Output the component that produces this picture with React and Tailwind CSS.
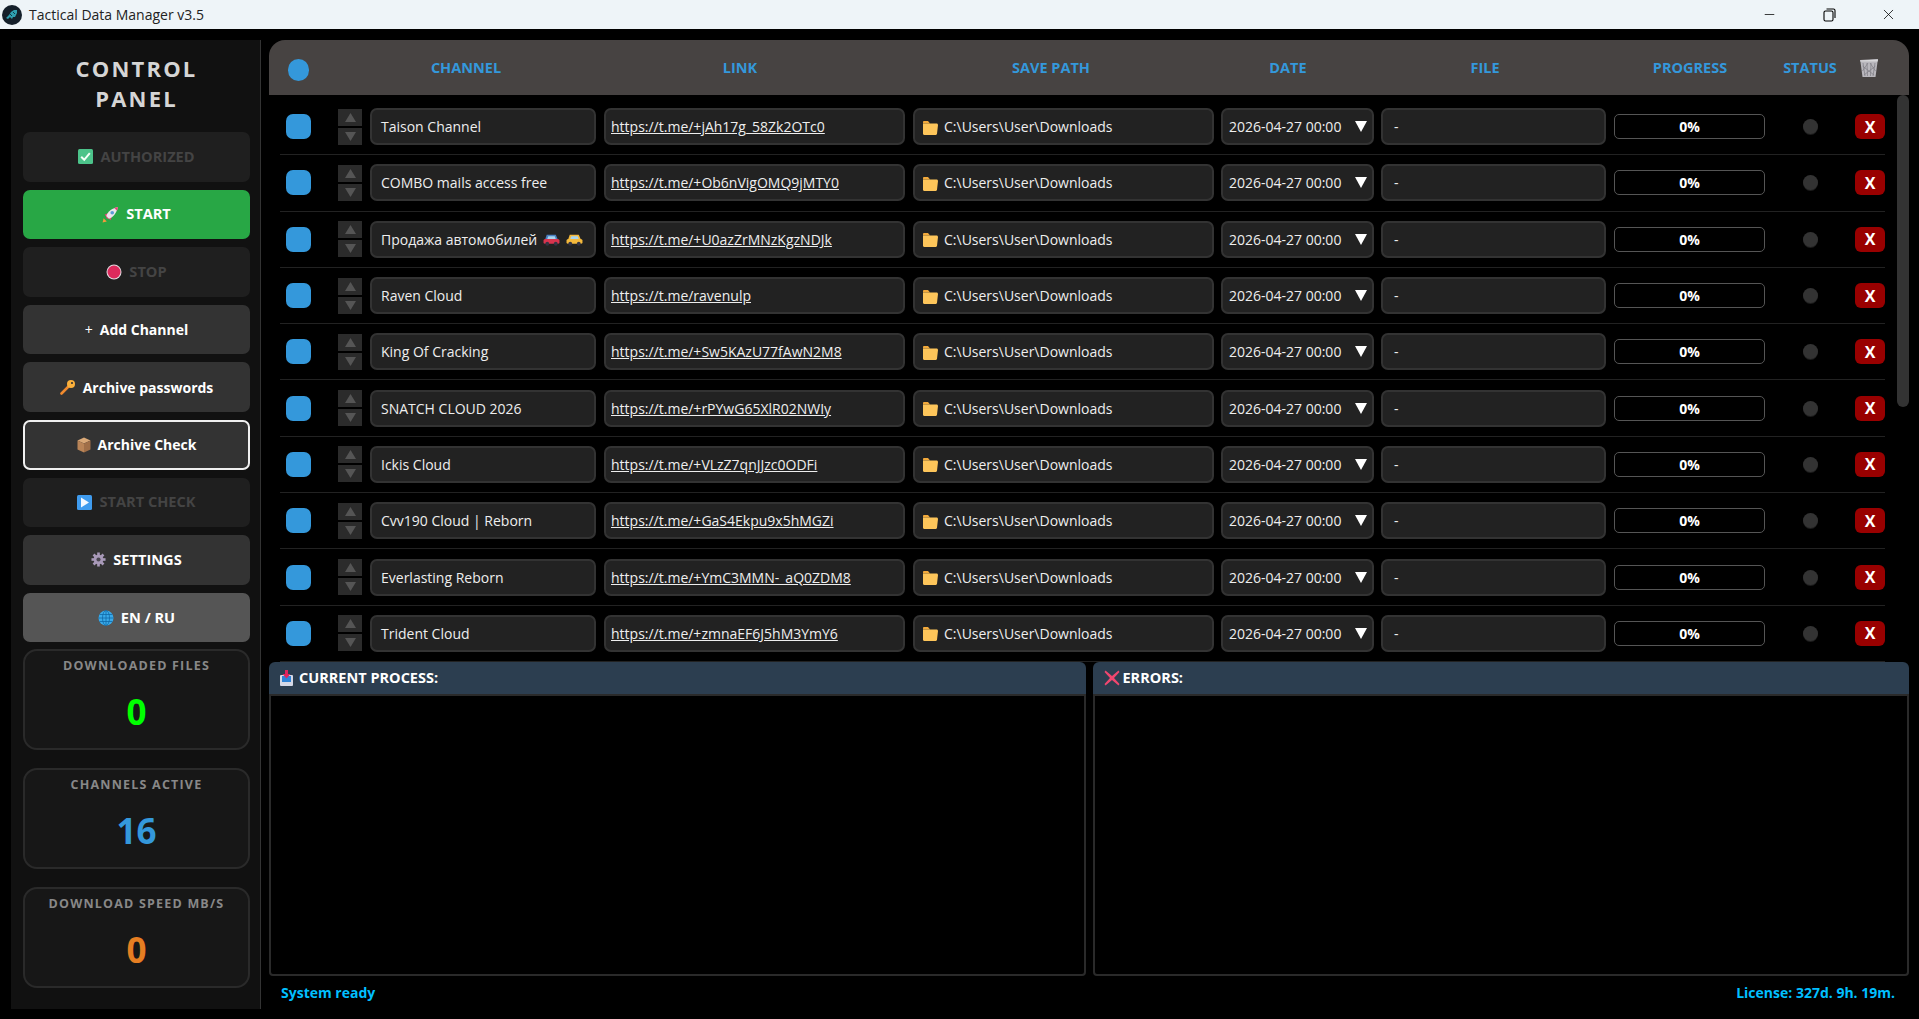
import { Minus, X } from "lucide-react";

const CHANNELS = [
  { name: "Taison Channel", link: "https://t.me/+jAh17g_58Zk2OTc0" },
  { name: "COMBO mails access free", link: "https://t.me/+Ob6nVigOMQ9jMTY0" },
  { name: "Продажа автомобилей", link: "https://t.me/+U0azZrMNzKgzNDJk", cars: true },
  { name: "Raven Cloud", link: "https://t.me/ravenulp" },
  { name: "King Of Cracking", link: "https://t.me/+Sw5KAzU77fAwN2M8" },
  { name: "SNATCH CLOUD 2026", link: "https://t.me/+rPYwG65XlR02NWIy" },
  { name: "Ickis Cloud", link: "https://t.me/+VLzZ7qnJJzc0ODFi" },
  { name: "Cvv190 Cloud | Reborn", link: "https://t.me/+GaS4Ekpu9x5hMGZi" },
  { name: "Everlasting Reborn", link: "https://t.me/+YmC3MMN-_aQ0ZDM8" },
  { name: "Trident Cloud", link: "https://t.me/+zmnaEF6J5hM3YmY6" },
];

// Emoji drawn by hand, there is no colour emoji font on the page
function CheckEmoji() {
  return (
    <svg width="15" height="15" viewBox="0 0 15 15">
      <rect width="15" height="15" rx="1.5" fill="#4cc38a" />
      <path d="M3.2 7.8 6.2 10.8 11.8 4.2" fill="none" stroke="#f4fff8" strokeWidth="2" />
    </svg>
  );
}

function RocketEmoji() {
  return (
    <svg width="17" height="17" viewBox="0 0 16 16">
      <path d="M0.5 15.5 1.5 11.5 4.5 14.5Z" fill="#f5993d" />
      <path d="M2.5 8 6.5 6.5 9.5 9.5 8 13.5 6 11.5 4.5 12 4 10Z" fill="#ef3f7a" />
      <path d="M4 9.5C5.5 5 10 2 15 1 14 6 11 10.5 6.5 12Z" fill="#e8e6ea" />
      <path d="M11.5 1.8 15 1 14.2 4.5Z" fill="#ef3f7a" />
      <circle cx="9.6" cy="6.4" r="1.7" fill="#5b9bd5" />
    </svg>
  );
}

function StopEmoji() {
  return (
    <svg width="16" height="16" viewBox="0 0 16 16">
      <circle cx="8" cy="8" r="7.5" fill="#e0dce0" />
      <circle cx="8" cy="8" r="6.5" fill="#dc2a5c" />
    </svg>
  );
}

function KeyEmoji() {
  return (
    <svg width="16" height="16" viewBox="0 0 16 16">
      <path d="M9 7 1.5 14.5" stroke="#f08a2e" strokeWidth="2.6" strokeLinecap="round" />
      <circle cx="11" cy="5" r="4" fill="#fbb03b" />
      <circle cx="12" cy="4" r="1.1" fill="#333333" />
    </svg>
  );
}

function PackageEmoji() {
  return (
    <svg width="14" height="16" viewBox="0 0 14 16">
      <path d="M7 0.5 13.5 3.5 7 6.5 0.5 3.5Z" fill="#d9a877" />
      <path d="M0.5 3.5 7 6.5V15.5L0.5 12.5Z" fill="#b98457" />
      <path d="M13.5 3.5 7 6.5V15.5L13.5 12.5Z" fill="#a06f48" />
    </svg>
  );
}

function PlayEmoji() {
  return (
    <svg width="15" height="15" viewBox="0 0 15 15">
      <rect width="15" height="15" rx="1.5" fill="#3f9bee" />
      <path d="M4 2.5 12 7.5 4 12.5Z" fill="#f4f8ff" />
    </svg>
  );
}

function GearEmoji() {
  return (
    <svg width="15" height="15" viewBox="0 0 16 16">
      <g stroke="#a899b8" strokeWidth="2.8">
        <path d="M8 0.5V15.5" />
        <path d="M0.5 8H15.5" />
        <path d="M2.7 2.7 13.3 13.3" />
        <path d="M13.3 2.7 2.7 13.3" />
      </g>
      <circle cx="8" cy="8" r="5.2" fill="#a899b8" />
      <circle cx="8" cy="8" r="2.2" fill="#4a4650" />
    </svg>
  );
}

function GlobeEmoji() {
  return (
    <svg width="16" height="16" viewBox="0 0 16 16">
      <circle cx="8" cy="8" r="7.5" fill="#39a9e8" />
      <g fill="none" stroke="#0f6aa8" strokeWidth="0.8">
        <ellipse cx="8" cy="8" rx="3.5" ry="7.5" />
        <path d="M8 0.5V15.5" />
        <path d="M0.5 8H15.5" />
        <path d="M1.6 4.5H14.4" />
        <path d="M1.6 11.5H14.4" />
      </g>
    </svg>
  );
}

function FolderEmoji() {
  return (
    <svg width="15" height="14" viewBox="0 0 15 14" className="mt-[2px] shrink-0">
      <path d="M0 1.2C0 .5.5 0 1.2 0H5L7 2.5H0Z" fill="#f2a93b" />
      <path d="M0 2.5H13.5C14.4 2.5 15 3.2 15 4L14 12.8C14 13.5 13.4 14 12.8 14H1.2C.5 14 0 13.5 0 12.8Z" fill="#fdc55a" />
    </svg>
  );
}

function CarEmoji({ body, top }) {
  return (
    <svg width="17" height="13" viewBox="0 0 16 12">
      <path d="M3.5 1.5H12L14 6H2Z" fill={top} />
      <path d="M5 3H11L12 5.5H4Z" fill="#a8d4ee" />
      <rect x="0.5" y="5.5" width="15" height="4.5" rx="1.5" fill={body} />
      <circle cx="4" cy="10" r="1.8" fill="#333344" />
      <circle cx="12" cy="10" r="1.8" fill="#333344" />
    </svg>
  );
}

function InboxEmoji() {
  return (
    <svg width="13" height="16" viewBox="0 0 13 16">
      <rect y="5" width="13" height="11" rx="1" fill="#d5d8e6" />
      <rect x="2" y="6" width="9" height="6" fill="#2f83d6" />
      <path d="M5 0H8V4H10.5L6.5 8.5 2.5 4H5Z" fill="#e0245e" />
    </svg>
  );
}

function TrashIcon() {
  return (
    <svg width="20" height="20" viewBox="0 0 20 20">
      <path d="M1 2 19 1 18.5 4 16.5 19H3.5L1.5 4Z" fill="#b9b7bd" />
      <path d="M1 2.5 19 1.5 18.7 3.6H1.3Z" fill="#d8d7da" />
      <path d="M4 5 6 18M8 5 8.5 18M12 5 11.5 18M16 5 14 18M3.5 8 15 17M16.5 8 5 17M3.5 13 9 5M16.5 13 11 5" stroke="#7e7c84" strokeWidth="0.7" />
    </svg>
  );
}

function AppLogo() {
  return (
    <svg width="20" height="20" viewBox="0 0 20 20">
      <circle cx="10" cy="10" r="10" fill="#15202b" />
      <path d="M4 13 7 10 9 7 12 5 15 5 15 8 13 12 11 12 10 14 8 12 6 14Z" fill="#2f9fb0" />
      <path d="M8 9 10 11M11 7 13 9" stroke="#103a48" strokeWidth="1" />
    </svg>
  );
}

function SideButton({ icon, label, variant = "normal", caps = false }) {
  const styles = {
    normal: "bg-[#333333] text-white",
    disabled: "bg-[#1f1f1f] text-[#444444]",
    start: "bg-[#28a745] text-white",
    focused: "bg-[#333333] text-white border-2 border-[#f0f0f0]",
    lang: "bg-[#555555] text-white",
  };
  return (
    <div className={`flex h-[49.6px] items-center justify-center gap-[7px] rounded-[7px] font-bold ${caps ? "text-[14.6px]" : "text-[14px]"} ${styles[variant]}`}>
      {icon}
      <span>{label}</span>
    </div>
  );
}

function StatCard({ label, value, color }) {
  return (
    <div className="flex h-[101px] flex-col items-center rounded-[14px] border-2 border-[#2a2a2a] bg-[#171717] pt-[6px]">
      <div className="text-[12.5px] font-bold tracking-[1.2px] text-[#888888]">{label}</div>
      <div className={`mt-[12px] text-[35px] font-bold leading-[48px] ${color}`}>{value}</div>
    </div>
  );
}

function Field({ className = "", children }) {
  return (
    <div className={`flex h-[37px] items-center rounded-[7px] border-2 border-[#333333] bg-[#222222] text-[14px] text-[#eeeeee] ${className}`}>
      {children}
    </div>
  );
}

function Row({ channel }) {
  return (
    <div className="grid flex-1 grid-cols-[58px_32px_234px_309px_308px_160px_233px_161px_70px_40px] items-center border-b border-[#222222]">
      <div className="ml-[6px] h-[25px] w-[25px] rounded-[7px] bg-[#3498db]" />
      <div className="flex w-[24px] flex-col gap-[2px]">
        <div className="flex h-[17px] items-center justify-center bg-[#2b2b2b]">
          <svg width="11" height="9" viewBox="0 0 11 9"><path d="M5.5 0 11 9H0Z" fill="#555555" /></svg>
        </div>
        <div className="flex h-[17px] items-center justify-center bg-[#2b2b2b]">
          <svg width="11" height="9" viewBox="0 0 11 9"><path d="M0 0H11L5.5 9Z" fill="#555555" /></svg>
        </div>
      </div>
      <Field className="w-[226px] gap-[6px] pl-[9px]">
        <span>{channel.name}</span>
        {channel.cars && <CarEmoji body="#d8344e" top="#4a7fc1" />}
        {channel.cars && <CarEmoji body="#f4b93c" top="#f4b93c" />}
      </Field>
      <Field className="w-[301px] pl-[5px]">
        <span className="underline">{channel.link}</span>
      </Field>
      <Field className="w-[300.5px] gap-[6px] pl-[8px]">
        <FolderEmoji />
        <span>C:\Users\User\Downloads</span>
      </Field>
      <Field className="w-[153px] justify-between pl-[6px] pr-[5px]">
        <span>2026-04-27 00:00</span>
        <svg width="12" height="11" viewBox="0 0 12 11" className="shrink-0"><path d="M0 0H12L6 11Z" fill="#ffffff" /></svg>
      </Field>
      <Field className="w-[224.5px] pl-[11px]">-</Field>
      <div className="flex h-[25px] w-[151px] items-center justify-center rounded-[5px] border border-[#555555] bg-black text-[14px] font-bold text-white">
        0%
      </div>
      <div className="flex justify-center">
        <div className="h-[15px] w-[15px] rounded-full bg-[#333333] shadow-[0_1px_0_#1c1c1c]" />
      </div>
      <div className="flex justify-end">
        <div className="flex h-[25px] w-[30px] items-center justify-center rounded-[6px] bg-[#990000] text-[16px] font-bold text-white">
          X
        </div>
      </div>
    </div>
  );
}

function LogPanel({ icon, title, gap }) {
  return (
    <div className="flex flex-col">
      <div className={`flex h-[32px] items-center rounded-t-[6px] bg-[#2c3e50] pl-[11px] text-[14.5px] font-bold text-white ${gap}`}>
        {icon}
        <span>{title}</span>
      </div>
      <div className="flex-1 rounded-b-[4px] border-2 border-[#2a2a2a] bg-black" />
    </div>
  );
}

export default function App() {
  return (
    <div className="flex h-screen flex-col overflow-hidden bg-black font-['Open_Sans',sans-serif]">
      {/* title bar */}
      <div className="flex h-[29px] items-center bg-[#eef4f8] pl-[2px] text-[14px] text-[#222222]">
        <AppLogo />
        <span className="ml-[7px]">Tactical Data Manager v3.5</span>
        <div className="ml-auto flex items-center pr-[22px] text-black">
          <Minus size={15} strokeWidth={1.2} />
          <svg width="13" height="14" viewBox="0 0 13 14" fill="none" stroke="#000000" strokeWidth="1.1" className="ml-[46px]">
            <rect x="1" y="3" width="9" height="10" rx="1.5" />
            <path d="M3.5 1H10.5C11.4 1 12 1.7 12 2.5V10" />
          </svg>
          <X size={17} strokeWidth={1.1} className="ml-[44px]" />
        </div>
      </div>

      <div className="flex min-h-0 flex-1 pb-[10px] pl-[11px] pr-[10px] pt-[11px]">
        {/* control panel */}
        <aside className="flex w-[250px] shrink-0 flex-col border-r border-[#333333] bg-[#111111] pl-[12px] pr-[10px]">
          <div className="pt-[13px] text-center text-[22px] font-bold leading-[30px] tracking-[2.2px] text-[#d5d5d5]">
            CONTROL
            <br />
            PANEL
          </div>
          <div className="mt-[19px] flex flex-col gap-[8px]">
            <SideButton caps variant="disabled" icon={<CheckEmoji />} label="AUTHORIZED" />
            <SideButton caps variant="start" icon={<RocketEmoji />} label="START" />
            <SideButton caps variant="disabled" icon={<StopEmoji />} label="STOP" />
            <SideButton icon={<span className="font-normal">+</span>} label="Add Channel" />
            <SideButton icon={<KeyEmoji />} label="Archive passwords" />
            <SideButton variant="focused" icon={<PackageEmoji />} label="Archive Check" />
            <SideButton caps variant="disabled" icon={<PlayEmoji />} label="START CHECK" />
            <SideButton caps icon={<GearEmoji />} label="SETTINGS" />
            <SideButton caps variant="lang" icon={<GlobeEmoji />} label="EN / RU" />
          </div>
          <div className="mt-[7px] flex flex-col gap-[18px]">
            <StatCard label="DOWNLOADED FILES" value="0" color="text-[#00ff00]" />
            <StatCard label="CHANNELS ACTIVE" value="16" color="text-[#3498db]" />
            <StatCard label="DOWNLOAD SPEED MB/S" value="0" color="text-[#e67e22]" />
          </div>
        </aside>

        <main className="ml-[8px] flex min-w-0 flex-1 flex-col">
          {/* table head */}
          <div className="grid h-[55px] shrink-0 grid-cols-[50px_272px_276px_346px_128px_266px_144px_96px_22px] items-center rounded-t-[16px] bg-[#474342] pl-[11px] text-center text-[14.5px] font-bold text-[#3498db]">
            <div className="ml-[8px] mt-[4px] h-[22px] w-[21px] rounded-full bg-[#3498db]" />
            <div>CHANNEL</div>
            <div>LINK</div>
            <div>SAVE PATH</div>
            <div>DATE</div>
            <div>FILE</div>
            <div>PROGRESS</div>
            <div>STATUS</div>
            <div className="flex justify-center">
              <TrashIcon />
            </div>
          </div>

          {/* rows and their scrollbar */}
          <div className="flex h-[567px] shrink-0">
            <div className="ml-[11px] flex w-[1605px] flex-col pt-[4px]">
              {CHANNELS.map((c) => (
                <Row key={c.name} channel={c} />
              ))}
            </div>
            <div className="ml-[12px] h-[312px] w-[12px] rounded-full bg-[#333333]" />
          </div>

          {/* logs */}
          <div className="grid min-h-0 flex-1 grid-cols-2 gap-[7px]">
            <LogPanel icon={<InboxEmoji />} title="CURRENT PROCESS:" gap="gap-[6px]" />
            <LogPanel
              icon={
                <svg width="16" height="16" viewBox="0 0 16 16">
                  <path d="M1.5 0.5 8 6 14.5 0.5 15.5 2 10 8 15.5 14 14.5 15.5 8 10 1.5 15.5 0.5 14 6 8 0.5 2Z" fill="#f0476f" />
                </svg>
              }
              title="ERRORS:"
              gap="gap-[3px]"
            />
          </div>

          <div className="flex h-[33px] shrink-0 items-center justify-between pl-[12px] pr-[14px] text-[14px] font-bold text-[#00bfff]">
            <span>System ready</span>
            <span>License: 327d. 9h. 19m.</span>
          </div>
        </main>
      </div>
    </div>
  );
}
